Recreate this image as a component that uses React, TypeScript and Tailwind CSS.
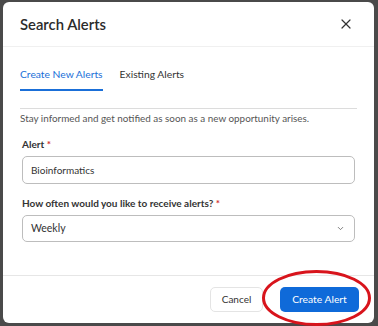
import { ChevronDown, X } from 'lucide-react';

export default function App() {
  return (
    <div className="w-[378px] h-[326px] bg-[#4a4a4a] pl-[3px] pt-[2px] font-['Lato',sans-serif] overflow-hidden relative">
      <div className="w-[371px] h-[321px] bg-white rounded-[6px] flex flex-col">
        {/* header */}
        <div className="h-[45px] flex items-center justify-between pl-[17px] pr-[20px] border-b border-[#f0f0f0]">
          <h2 className="text-[14.8px] font-semibold text-[#2b2b2b]">Search Alerts</h2>
          <X className="w-[16px] h-[16px] text-[#333]" strokeWidth={1.8} />
        </div>

        <div className="px-[17px] flex flex-col">
          {/* tabs */}
          <div className="flex gap-[17px] mt-[20px] text-[10.3px] leading-[14px]">
            <div className="text-[#1a6fd8] pb-[8px] border-b-2 border-[#1a6fd8]">Create New Alerts</div>
            <div className="text-[#333]">Existing Alerts</div>
          </div>
          <div className="mt-[17px] border-t border-[#dcdcdc] pt-[2px]">
            <p className="text-[9.9px] leading-[15px] text-[#555]">Stay informed and get notified as soon as a new opportunity arises.</p>
          </div>

          {/* form */}
          <label className="mt-[11px] ml-[2px] text-[10px] leading-[14px] font-bold text-[#333]">
            Alert <span className="text-[#d32f2f]">*</span>
          </label>
          <div className="mt-[5px] ml-[2px] w-[333px] h-[28px] border border-[#bdbdbd] rounded-[5px] flex items-center pl-[8px] text-[10px] text-[#333]">
            Bioinformatics
          </div>

          <label className="mt-[12px] ml-[2px] text-[10px] leading-[14px] font-bold text-[#333]">
            How often would you like to receive alerts? <span className="text-[#d32f2f]">*</span>
          </label>
          <div className="mt-[5px] ml-[2px] w-[333px] h-[27px] border border-[#bdbdbd] rounded-[5px] flex items-center justify-between pl-[8px] pr-[9px] text-[10.5px] text-[#333]">
            <span>Weekly</span>
            <ChevronDown className="w-[9px] h-[9px] text-[#555]" strokeWidth={2} />
          </div>
        </div>

        {/* footer */}
        <div className="mt-auto h-[48px] border-t border-[#e6e6e6] flex items-center justify-end gap-[17px] pr-[15px]">
          <button className="h-[25px] w-[53px] rounded-[5px] border border-[#e4e4e4] text-[10px] text-[#333]">Cancel</button>
          <button className="h-[25px] w-[79px] rounded-[5px] bg-[#0f6ad9] text-[10.3px] text-white">Create Alert</button>
        </div>
      </div>

      {/* annotation ring */}
      <svg className="absolute left-[261px] top-[269px]" width="112" height="58" viewBox="0 0 112 58">
        <ellipse cx="55.5" cy="29" rx="53" ry="26.5" fill="none" stroke="#d8141c" strokeWidth="3" />
      </svg>
    </div>
  );
}
